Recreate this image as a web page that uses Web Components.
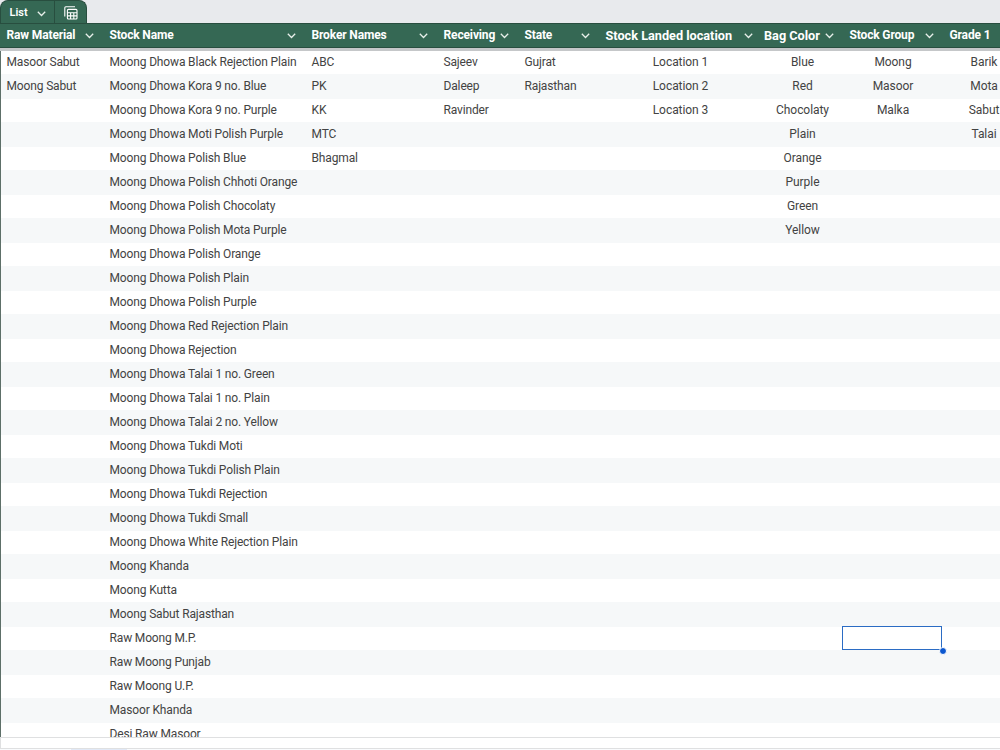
<!DOCTYPE html>
<html lang="en">
<head>
<meta charset="utf-8">
<title>List</title>
<style>
  body {
    margin: 0;
    overflow: hidden;
    font-family: Roboto, "Liberation Sans", sans-serif;
    font-size: 12px;
  }
</style>
</head>
<body>
<sheet-app>
  <sheet-tab slot="tab">List</sheet-tab>
  <sheet-table></sheet-table>
</sheet-app>

<script>
const COLUMNS = [
  { title: 'Raw Material', width: 103, values: ['Masoor Sabut', 'Moong Sabut'] },
  { title: 'Stock Name', width: 202, values: [
    'Moong Dhowa Black Rejection Plain', 'Moong Dhowa Kora 9 no. Blue', 'Moong Dhowa Kora 9 no. Purple',
    'Moong Dhowa Moti Polish Purple', 'Moong Dhowa Polish Blue', 'Moong Dhowa Polish Chhoti Orange',
    'Moong Dhowa Polish Chocolaty', 'Moong Dhowa Polish Mota Purple', 'Moong Dhowa Polish Orange',
    'Moong Dhowa Polish Plain', 'Moong Dhowa Polish Purple', 'Moong Dhowa Red Rejection Plain',
    'Moong Dhowa Rejection', 'Moong Dhowa Talai 1 no. Green', 'Moong Dhowa Talai 1 no. Plain',
    'Moong Dhowa Talai 2 no. Yellow', 'Moong Dhowa Tukdi Moti', 'Moong Dhowa Tukdi Polish Plain',
    'Moong Dhowa Tukdi Rejection', 'Moong Dhowa Tukdi Small', 'Moong Dhowa White Rejection Plain',
    'Moong Khanda', 'Moong Kutta', 'Moong Sabut Rajasthan', 'Raw Moong M.P.', 'Raw Moong Punjab',
    'Raw Moong U.P.', 'Masoor Khanda', 'Desi Raw Masoor'
  ] },
  { title: 'Broker Names', width: 132, values: ['ABC', 'PK', 'KK', 'MTC', 'Bhagmal'] },
  { title: 'Receiving', width: 81, values: ['Sajeev', 'Daleep', 'Ravinder'] },
  { title: 'State', width: 81, values: ['Gujrat', 'Rajasthan'] },
  { title: 'Stock Landed location', width: 163, align: 'center', large: true, values: ['Location 1', 'Location 2', 'Location 3'] },
  { title: 'Bag Color', width: 81, align: 'center', large: true, tight: true, values: ['Blue', 'Red', 'Chocolaty', 'Plain', 'Orange', 'Purple', 'Green', 'Yellow'] },
  { title: 'Stock Group', width: 100, align: 'center', values: ['Moong', 'Masoor', 'Malka'] },
  { title: 'Grade 1', width: 82, align: 'center', values: ['Barik', 'Mota', 'Sabut', 'Talai'] }
];
const ROW_COUNT = 29;
const SELECTED = { row: 24, column: 7 };

class ChevronIcon extends HTMLElement {
  constructor() {
    super();
    this.attachShadow({ mode: 'open' });
    this.shadowRoot.innerHTML = `
      <style>
        :host { display: block; width: 9px; height: 6px; flex: none; }
        svg { display: block; }
      </style>
      <svg width="9" height="6" viewBox="0 0 9 6" fill="none" stroke="#e8f0eb" stroke-width="1.3">
        <path d="M.8 .8 4.5 4.5 8.2 .8"/>
      </svg>
    `;
  }
}

class SheetTab extends HTMLElement {
  constructor() {
    super();
    this.attachShadow({ mode: 'open' });
    this.shadowRoot.innerHTML = `
      <style>
        :host {
          display: flex;
          box-sizing: border-box;
          width: 87px;
          height: 24px;
          background: #356854;
          border: 1px solid #284e3f;
          border-bottom: none;
          border-radius: 8px 8px 0 0;
          color: #fff;
          font-size: 11px;
          font-weight: 600;
        }

        .name {
          display: flex;
          align-items: center;
          justify-content: space-between;
          box-sizing: border-box;
          width: 54px;
          padding: 0 8px 0 8.5px;
          border-right: 1px solid #284e3f;
        }

        chevron-icon { margin-top: 3px; }

        .menu {
          display: flex;
          flex: 1;
          align-items: center;
          justify-content: center;
          padding-top: 1px;
        }
      </style>
      <div class="name"><span><slot></slot></span><chevron-icon></chevron-icon></div>
      <div class="menu">
        <svg width="14" height="14" viewBox="0 0 14 14" fill="none" stroke="#fff" stroke-width="1.1">
          <path d="M.8 10.5V1.8Q.8 .8 1.8 .8H11"/>
          <rect x="3.4" y="3.4" width="9.6" height="9.6" rx="1"/>
          <path d="M3.4 6.8H13M3.4 9.9H13M6.6 6.8V13M9.8 6.8V13"/>
        </svg>
      </div>
    `;
  }
}

class HeaderCell extends HTMLElement {
  constructor() {
    super();
    this.attachShadow({ mode: 'open' });
    this.shadowRoot.innerHTML = `
      <style>
        :host {
          display: flex;
          align-items: center;
          justify-content: space-between;
          box-sizing: border-box;
          min-width: 0;
          padding: 0 9.5px 1px 6.5px;
          color: #fff;
          font-size: 12px;
          font-weight: 700;
          letter-spacing: -.14px;
          white-space: nowrap;
        }

        :host([large]) {
          padding-bottom: 0;
          font-size: 12.7px;
          letter-spacing: 0;
        }

        :host([tight]) { padding-left: 2px; }
        chevron-icon { margin-top: 2px; }
        :host([large]) chevron-icon { margin-top: 1px; }
      </style>
      <span><slot></slot></span><chevron-icon></chevron-icon>
    `;
  }
}

class SheetCell extends HTMLElement {
  constructor() {
    super();
    this.attachShadow({ mode: 'open' });
    this.shadowRoot.innerHTML = `
      <style>
        :host {
          display: block;
          position: relative;
          min-width: 0;
          padding: 0 6.5px;
          line-height: 24px;
          letter-spacing: -.145px;
          white-space: nowrap;
        }

        :host([align="center"]) {
          padding: 0;
          letter-spacing: -.06px;
          text-align: center;
        }

        .selection { display: none; }

        :host([selected]) .selection {
          display: block;
          position: absolute;
          inset: 0 1px 0 -1px;
          box-sizing: border-box;
          border: 1px solid #2b6cc4;
        }

        .handle {
          position: absolute;
          right: -6px;
          bottom: -6px;
          width: 6px;
          height: 6px;
          border: 1px solid #fff;
          border-radius: 50%;
          background: #0b57d0;
        }
      </style>
      <slot></slot>
      <div class="selection"><div class="handle"></div></div>
    `;
  }
}

class SheetTable extends HTMLElement {
  constructor() {
    super();
    this.attachShadow({ mode: 'open' });
  }

  connectedCallback() {
    this.render();
  }

  renderHeader() {
    return COLUMNS.map(column => `
      <header-cell ${column.large ? 'large' : ''} ${column.tight ? 'tight' : ''}>${column.title}</header-cell>
    `).join('');
  }

  renderRow(row) {
    const cells = COLUMNS.map((column, index) => {
      const selected = row === SELECTED.row && index === SELECTED.column;
      return `<sheet-cell align="${column.align || 'left'}" ${selected ? 'selected' : ''}>${column.values[row] || ''}</sheet-cell>`;
    });
    return `<div class="grid row">${cells.join('')}</div>`;
  }

  render() {
    const tracks = COLUMNS.map(column => column.width + 'px').join(' ');
    const rows = Array.from({ length: ROW_COUNT }, (_, row) => this.renderRow(row)).join('');

    this.shadowRoot.innerHTML = `
      <style>
        :host {
          display: flex;
          flex-direction: column;
          flex: 1;
          min-height: 0;
        }

        .grid { display: grid; grid-template-columns: ${tracks}; }

        .header {
          flex: none;
          box-sizing: border-box;
          height: 25px;
          background: #356854;
          border-top: 1px solid #284e3f;
          border-bottom: 1px solid #284e3f;
        }

        .freeze { flex: none; height: 3px; background: #c5c7c9; }

        /* rows start one pixel under the freeze bar */
        .body {
          flex: 1;
          min-height: 0;
          margin-top: -1px;
          overflow: hidden;
          clip-path: inset(1px 0 0 0);
          border-left: 1px solid #5d6f68;
          color: #434343;
        }

        .row { height: 24px; margin-left: -1px; }

        .row:nth-child(even) {
          background: #f6f8f9 padding-box;
          box-shadow: 0 1px #f6f8f9;
        }
      </style>
      <div class="grid header">${this.renderHeader()}</div>
      <div class="freeze"></div>
      <div class="body">${rows}</div>
    `;
  }
}

class SheetApp extends HTMLElement {
  constructor() {
    super();
    this.attachShadow({ mode: 'open' });
    this.shadowRoot.innerHTML = `
      <style>
        :host {
          display: flex;
          flex-direction: column;
          width: 1000px;
          height: 750px;
          overflow: hidden;
          background: #fff;
        }

        .tabs { flex: none; height: 23px; background: #e8eaed; }

        .scrollbar {
          flex: none;
          box-sizing: border-box;
          height: 12px;
          border: 1px solid #dfe0e1;
          border-width: 1px 0 1px 1px;
        }

        .footer { flex: none; height: 1px; background: #f9fbfd; }

        .active {
          width: 56px;
          height: 1px;
          margin-left: 71px;
          background: #e1e9f7;
        }
      </style>
      <div class="tabs"><slot name="tab"></slot></div>
      <slot></slot>
      <div class="scrollbar"></div>
      <div class="footer"><div class="active"></div></div>
    `;
  }
}

customElements.define('chevron-icon', ChevronIcon);
customElements.define('sheet-tab', SheetTab);
customElements.define('header-cell', HeaderCell);
customElements.define('sheet-cell', SheetCell);
customElements.define('sheet-table', SheetTable);
customElements.define('sheet-app', SheetApp);
</script>
</body>
</html>
